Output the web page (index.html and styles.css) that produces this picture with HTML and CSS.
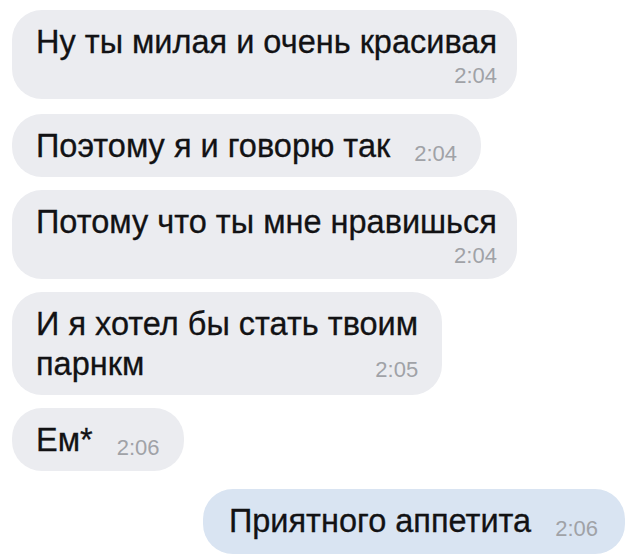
FILE: index.html
```html
<!DOCTYPE html>
<html lang="ru">
<head>
    <meta charset="UTF-8">
    <meta name="viewport" content="width=device-width, initial-scale=1.0">
    <title>Чат</title>
    <link rel="stylesheet" href="styles.css">
</head>
<body>
    <div class="chat">
        <div class="bubble bubble--stacked bubble--first">
            <p class="bubble__text">Ну ты милая и очень красивая</p>
            <span class="bubble__time">2:04</span>
        </div>

        <div class="bubble bubble--inline">
            <p class="bubble__text">Поэтому я и говорю так</p>
            <span class="bubble__time">2:04</span>
        </div>

        <div class="bubble bubble--stacked">
            <p class="bubble__text">Потому что ты мне нравишься</p>
            <span class="bubble__time">2:04</span>
        </div>

        <div class="bubble">
            <p class="bubble__text">И я хотел бы стать твоим<br>парнкм<span class="bubble__time bubble__time--float">2:05</span></p>
        </div>

        <div class="bubble bubble--inline">
            <p class="bubble__text">Ем*</p>
            <span class="bubble__time">2:06</span>
        </div>

        <div class="bubble bubble--inline bubble--out">
            <p class="bubble__text">Приятного аппетита</p>
            <span class="bubble__time">2:06</span>
        </div>
    </div>
</body>
</html>
```

FILE: styles.css
```css
body {
    margin: 0;
    background: #ffffff;
    font-family: 'Liberation Sans', Arial, sans-serif;
    color: #121214;
}

.chat {
    display: flex;
    flex-direction: column;
    align-items: flex-start;
    gap: 13px;
    padding: 10px 15px 0 12px;
}

.bubble {
    background: #ebecf0;
    border-radius: 30px;
    padding: 12px 24px 11px;
}

.bubble--inline {
    display: flex;
    align-items: flex-end;
    gap: 24px;
}

.bubble--stacked {
    display: flex;
    flex-direction: column;
    padding-right: 20px;
    padding-bottom: 9px;
}

.bubble--stacked .bubble__time {
    align-self: flex-end;
    line-height: 28px;
}

.bubble--first {
    margin-bottom: 2px;
}

.bubble--out {
    align-self: flex-end;
    background: #d9e4f2;
    padding-left: 26px;
    padding-right: 27px;
    padding-bottom: 13px;
    margin-top: 5px;
}

.bubble__text {
    margin: 0;
    font-size: 32.5px;
    line-height: 40px;
    -webkit-text-stroke: 0.3px #121214;
}

.bubble__time {
    font-size: 22px;
    line-height: 24px;
    color: #a0a2a7;
    -webkit-text-stroke: 0;
}

.bubble__time--float {
    float: right;
    margin-top: 14px;
    margin-left: 24px;
}
```
